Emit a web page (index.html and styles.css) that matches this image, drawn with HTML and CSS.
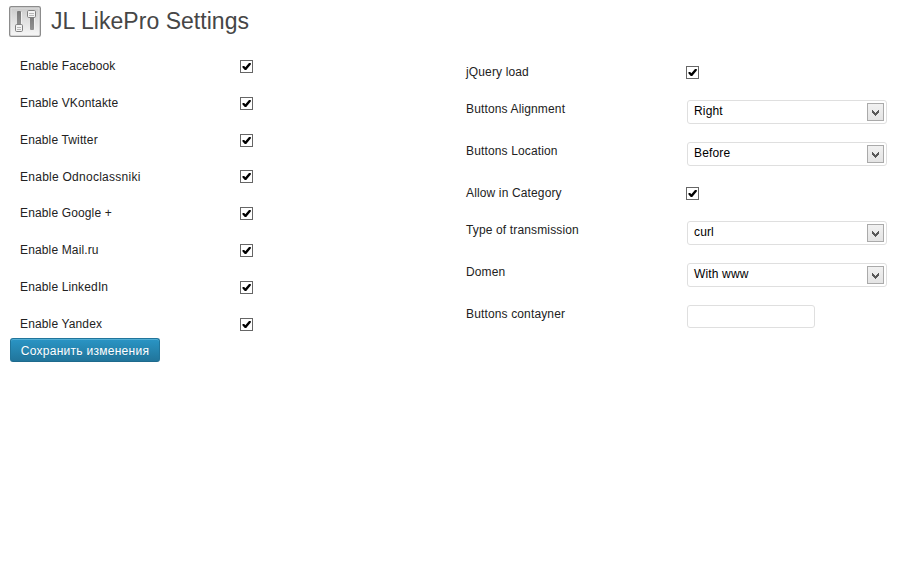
FILE: index.html
```html
<!DOCTYPE html>
<html lang="ru">
<head>
<meta charset="utf-8">
<title>JL LikePro Settings</title>
<link rel="stylesheet" href="styles.css">
</head>
<body>
<svg width="0" height="0" class="defs" aria-hidden="true">
  <symbol id="check" viewBox="0 0 13 13"><path d="M2.500 6H4.200L5.300 7.300 9 3H10.800V4.600L6.200 10H4.800L2.500 7.500Z" fill="#000"/></symbol>
  <symbol id="arrow" viewBox="0 0 7 6"><path d="M0 0H1V1H2V2H3V3H4V2H5V1H6V0H7V3H6V4H5V5H4V6H3V5H2V4H1V3H0Z" fill="#585858"/></symbol>
</svg>
<header class="header">
  <svg class="icon" viewBox="0 0 32 31">
    <defs>
      <linearGradient id="bg" x1="0" y1="0" x2="0" y2="1"><stop offset="0" stop-color="#cacaca"/><stop offset="1" stop-color="#f8f8f8"/></linearGradient>
      <linearGradient id="shaft" x1="0" y1="0" x2="0" y2="1"><stop offset="0" stop-color="#777"/><stop offset="1" stop-color="#929292"/></linearGradient>
    </defs>
    <rect x=".75" y=".75" width="30.5" height="29.5" rx="1.5" fill="url(#bg)" stroke="#8c8c8c" stroke-width="1.5"/>
    <rect x="1.9" y="1.9" width="28.2" height="27.2" fill="none" stroke="#eee" stroke-width=".7"/>
    <rect x="8" y="5" width="4" height="16" rx="1" fill="url(#shaft)"/>
    <rect x="21" y="9" width="4" height="15" rx="1" fill="url(#shaft)"/>
    <path d="M12.500 6V19M25.500 11V24" stroke="#f0f0f0"/>
    <rect x="6.500" y="18.500" width="7" height="7" rx="1.200" fill="#f4f4f4" stroke="#808080"/>
    <rect x="18.500" y="4.500" width="8" height="7" rx="1.200" fill="#f4f4f4" stroke="#808080"/>
    <path d="M8 21.500H12M8 23.500H12M20 7.500H25M20 9.500H25" stroke="#b8b8b8"/>
  </svg>
  <h1>JL LikePro Settings</h1>
</header>
<main class="columns">
  <section class="left">
    <div class="row"><span class="label">Enable Facebook</span><svg class="box"><use href="#check"/></svg></div>
    <div class="row"><span class="label">Enable VKontakte</span><svg class="box"><use href="#check"/></svg></div>
    <div class="row"><span class="label">Enable Twitter</span><svg class="box"><use href="#check"/></svg></div>
    <div class="row"><span class="label wide">Enable Odnoclassniki</span><svg class="box"><use href="#check"/></svg></div>
    <div class="row"><span class="label">Enable Google +</span><svg class="box"><use href="#check"/></svg></div>
    <div class="row"><span class="label">Enable Mail.ru</span><svg class="box"><use href="#check"/></svg></div>
    <div class="row"><span class="label">Enable LinkedIn</span><svg class="box"><use href="#check"/></svg></div>
    <div class="row last"><span class="label">Enable Yandex</span><svg class="box"><use href="#check"/></svg></div>
    <button class="save" type="button">Сохранить изменения</button>
  </section>
  <section class="right">
    <div class="row"><span class="label">jQuery load</span><svg class="box"><use href="#check"/></svg></div>
    <div class="row tall"><span class="label">Buttons Alignment</span><div class="select"><span>Right</span><i class="drop"><svg><use href="#arrow"/></svg></i></div></div>
    <div class="row tall"><span class="label">Buttons Location</span><div class="select"><span>Before</span><i class="drop"><svg><use href="#arrow"/></svg></i></div></div>
    <div class="row"><span class="label">Allow in Category</span><svg class="box"><use href="#check"/></svg></div>
    <div class="row tall"><span class="label">Type of transmission</span><div class="select"><span>curl</span><i class="drop"><svg><use href="#arrow"/></svg></i></div></div>
    <div class="row tall"><span class="label">Domen</span><div class="select"><span>With www</span><i class="drop"><svg><use href="#arrow"/></svg></i></div></div>
    <div class="row tall"><span class="label">Buttons contayner</span><input class="field" type="text"></div>
  </section>
</main>
</body>
</html>
```
FILE: styles.css
```css
* { box-sizing: border-box; }
body {
  margin: 0;
  background: #fff;
  color: #222;
  font: 12px/20px "Liberation Sans", Arial, sans-serif;
}
.defs { display: none; }
.header {
  display: flex;
  height: 56px;
  padding: 6px 0 0 9px;
}
.icon { width: 32px; height: 31px; }
h1 {
  margin: 0 0 0 10px;
  color: #464646;
  font-size: 23px;
  font-weight: 400;
  line-height: 30px;
  letter-spacing: 0.04px;
}
.columns { display: grid; grid-template-columns: 456px 1fr; }
.left { padding-left: 10px; }
.left .row { padding-left: 10px; height: 36.8px; }
.left .last { height: 24.4px; }
.right { padding: 6px 0 0 10px; }
.row { display: flex; align-items: flex-start; height: 37px; }
.right .tall { height: 42px; }
.label { width: 220px; letter-spacing: 0.14px; }
.wide { padding-top: 0.5px; letter-spacing: 0.26px; }
.box {
  width: 13px;
  height: 13px;
  margin-top: 4px;
  box-shadow: inset 0 0 0 1px #666;
  background: #fff;
}
.select {
  display: flex;
  justify-content: space-between;
  width: 200px;
  height: 24px;
  margin: 1px 0 0 1px;
  padding: 2px 2px 2px 6px;
  border: 1px solid #dfdfdf;
  border-radius: 3px;
  color: #000;
  line-height: 17px;
  letter-spacing: 0.15px;
}
.drop {
  display: flex;
  align-items: center;
  justify-content: center;
  width: 17px;
  height: 18px;
  border: 1px solid #aaa;
  background: linear-gradient(#f1f1f1, #e4e4e4);
}
.drop svg { width: 7px; height: 6px; margin-top: 2px; }
.field {
  width: 128px;
  height: 23px;
  margin: 1px 0 0 1px;
  border: 1px solid #dfdfdf;
  border-radius: 3px;
  background: #fff;
}
.save {
  display: block;
  width: 150px;
  height: 24px;
  padding: 2px 0 0;
  border: 1px solid #21759b;
  border-bottom-color: #1e6a8d;
  border-radius: 3px;
  background: linear-gradient(#2a95c5, #21759b);
  box-shadow: inset 0 1px 0 rgba(120, 200, 230, 0.5);
  color: #fff;
  font: 12px/20px "Liberation Sans", Arial, sans-serif;
  letter-spacing: 0.27px;
  white-space: nowrap;
  text-shadow: 0 1px 0 rgba(0, 0, 0, 0.1);
}
```
